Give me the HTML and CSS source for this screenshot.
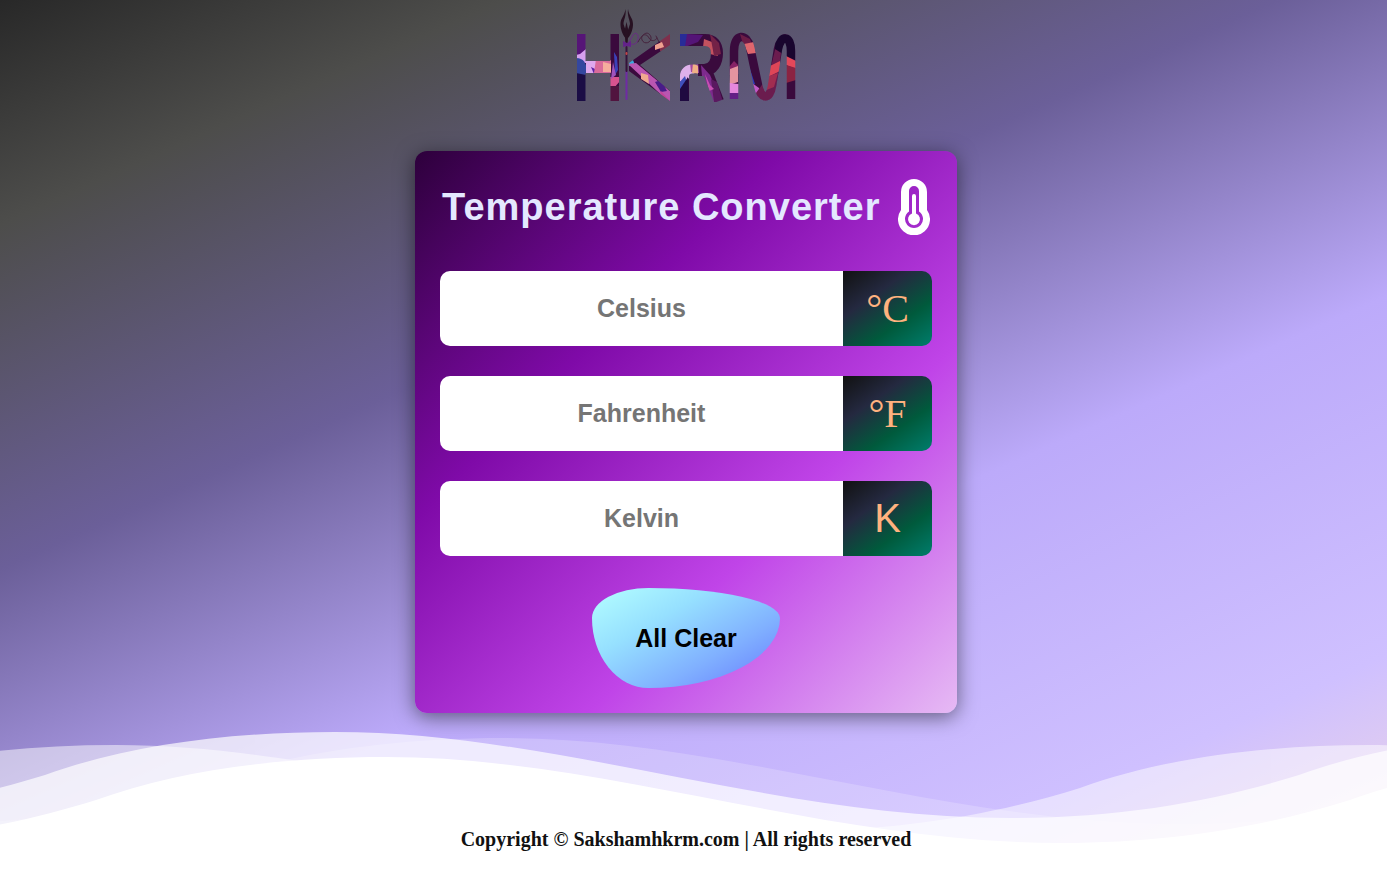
FILE: index.html
```html
<!DOCTYPE html>
<html lang="en">
<head>
<meta charset="utf-8">
<meta name="viewport" content="width=device-width, initial-scale=1">
<title>Temperature Converter</title>
<link rel="stylesheet" href="styles.css">
</head>
<body>
<header class="brand">
  <svg class="logo" viewBox="0 0 220 93" role="img" aria-label="HKRM">
    <defs>
      <mask id="letters" maskUnits="userSpaceOnUse" x="0" y="0" width="220" height="93">
        <g fill="#fff">
          <path d="M1 25h8.500v27h25V25h8.500v67h-8.500V64h-25v28H1z"/>
          <path d="M53 54 94 25v11L64 56l30 26v10L53 62z"/>
        </g>
        <g fill="none" stroke="#fff">
          <path stroke-width="12" d="M104 31h25c8 0 12 5 12 13 0 9-4 17-13 17h-6"/>
          <path stroke-width="10" d="m129 56 14 36"/>
          <path stroke-width="9" d="M108.500 92V67c0-4 3-7 8-7h10"/>
          <path stroke-width="8.500" d="M158 90V42c0-18 13-18 16-4l8 38c3 15 12 15 14 1l6-37c3-15 13-14 13 2v48"/>
        </g>
      </mask>
    </defs>
    <g mask="url(#letters)">
      <path fill="#3a0a3d" d="M0 0h220v93H0z"/>
      <path fill="#561577" d="M0 25h10v27H0z"/>
      <path fill="#d6a0ee" d="m4 45 6-5v14H0v-8z"/>
      <path fill="#34479f" d="M0 49c8 0 10 5 11 12l-3 9-8-1z"/>
      <path fill="#1b0d45" d="M0 64 10 66v27H0z"/>
      <path fill="#dfa9ee" d="M10 50h12v15H10z"/>
      <path fill="#5c22a6" d="m15 58 6 3-3 4z"/>
      <path fill="#d96b9a" d="m20 50 15 1v13H18z"/>
      <path fill="#f5ad9d" d="m27 53 8 2v8h-8z"/>
      <path fill="#3b41b8" d="m38 43 3 5 1 13-3 5z"/>
      <path fill="#d8538f" d="M33 68h11v4l-6 7h-5z"/>
      <path fill="#9f53bc" d="m37 53 3 13-5 4z"/>
      <path fill="#51143f" d="M33 77h12v16H33z"/>
      <path fill="#7e2f4c" d="m84 31 11-9v22l-11-2z"/>
      <path fill="#f0a08f" d="m79 36 7-3 2 5-9 3z"/>
      <path fill="#39a6dc" d="m52 52 5-1 2 5-7 1z"/>
      <path fill="#b956b1" d="m52 55 8-1 35 29v12z"/>
      <path fill="#f0a98f" d="m65 64 7 2 1 9-8-5z"/>
      <path fill="#481c88" d="m79 73 6-2 6 11-6 1z"/>
      <path fill="#c4449a" d="m85 82 9 10H82z"/>
      <path fill="#282c97" d="M104 25h7v13h-8z"/>
      <path fill="#541477" d="m111 25 16 1-5 7-13 5z"/>
      <path fill="#c4525f" d="m128 30 8 3 6 14-8-2-7-7z"/>
      <path fill="#742247" d="m134 25 9 9 2 11-7 2z"/>
      <path fill="#dfb1eb" d="M103 57c4-6 9-6 14-4l2 11-12 10-5-3z"/>
      <path fill="#a64a9d" d="m114 54 8-1 1 11-8-1z"/>
      <path fill="#f0b186" d="m117 54 5 3v8l-6-1z"/>
      <path fill="#7d2a8d" d="m125 56 9 10 12 27h-12l-8-26z"/>
      <path fill="#5a1960" d="m135 70 6 3 6 20h-9z"/>
      <path fill="#c850b2" d="m129 65 5 11 4 4-5 2z"/>
      <path fill="#4050bb" d="m103 74 6-7 2 7-6 11z"/>
      <path fill="#1f0a40" d="m112 68-8 12v13h9z"/>
      <path fill="#862266" d="m153 58 5-6 4 4 1 9-10 1z"/>
      <path fill="#e494a0" d="m154 60 8-3v16l-9 3z"/>
      <path fill="#e587dd" d="m153 74 10 1v10h-10z"/>
      <path fill="#641f86" d="M153 84h10v9h-10z"/>
      <path fill="#6b1c46" d="m164 25 10 5 3 9-10-4z"/>
      <path fill="#df666d" d="m168 35 10-2 2 11-8 1z"/>
      <path fill="#2b38bb" d="m173 57 6 18-5 2z"/>
      <path fill="#c258c7" d="m176 74 7 5 2 6-7-1z"/>
      <path fill="#6b1c4e" d="m180 84 13-18 8-33 5 3-7 53-14 5z"/>
      <path fill="#df4657" d="m192 58 12-6v10l-14 7z"/>
      <path fill="#a12d50" d="m190 68 12-4-4 14-10 4z"/>
      <path fill="#19052e" d="m200 25 20 1-1 25-9-4-11-7z"/>
      <path fill="#e3485a" d="m210 47 10 5v8l-10-4z"/>
      <path fill="#8b2342" d="m210 56 10 3v12l-10 3z"/>
    </g>
    <g fill="#271122">
      <path d="M49.500 0c1 7-2 11-2 15l3 9-1 5c-3-3-5-9-5-14 0-6 4-8 5-15z"/>
      <path d="M52 0c-1 7 2 11 2 15l-3 9 1 5c3-3 5-9 5-14 0-6-4-8-5-15z"/>
      <path d="m50.500 13 2 9-1 13h-2l-1-13z"/>
    </g>
    <g fill="none" stroke-linecap="round" stroke-linejoin="round">
      <path stroke="#6b2c86" d="m52 35 5-9c3-4 6 0 5 4-1 5-4 6-7 5"/>
      <path stroke="#46233d" d="M62 33c5-9 10-12 13-5 1 6-7 8-9 3-2-6 5-7 7-2 2 4 7 3 8 0m-1-2 3 6"/>
      <path stroke="#6f2ba4" stroke-width="2" d="M50.500 62v28"/>
      <path stroke="#35133b" stroke-width="2" d="M50.500 38v24"/>
      <path stroke="#c44646" stroke-width="2" d="M50.500 44v1"/>
    </g>
    <path fill="#63228a" d="m47 32 4 2 4-2v6l-4-1-4 1z"/>
  </svg>
</header>

<main class="card">
  <div class="heading">
    <h1 class="title">Temperature Converter</h1>
    <svg class="thermometer" viewBox="0 0 32 56" aria-hidden="true">
      <path fill-rule="evenodd" d="M3 13a13 13 0 0 1 26 0v18a16 16 0 1 1-26 0zM11 12v20.500a9 9 0 1 0 10 0V12a5 5 0 0 0-10 0z"/>
      <path d="M14 17a2 2 0 0 1 4 0v17.500a6 6 0 1 1-4 0z"/>
    </svg>
  </div>
  <form class="converter">
    <div class="field">
      <input class="value" id="celsius" type="text" placeholder="Celsius">
      <label class="unit" for="celsius">°C</label>
    </div>
    <div class="field">
      <input class="value" id="fahrenheit" type="text" placeholder="Fahrenheit">
      <label class="unit" for="fahrenheit">°F</label>
    </div>
    <div class="field">
      <input class="value" id="kelvin" type="text" placeholder="Kelvin">
      <label class="unit unit-plain" for="kelvin">K</label>
    </div>
    <button class="clear" type="reset">All Clear</button>
  </form>
</main>

<footer class="footer">
  <svg class="waves" viewBox="0 0 1387 148" preserveAspectRatio="none" aria-hidden="true">
    <defs>
      <path id="wave" d="M0 43C80 14 180 0 290 0c220 0 440 86 675 86 115 0 209-18 289-43v160H0z"/>
      <g id="swell"><use href="#wave" x="-1254"/><use href="#wave"/><use href="#wave" x="1254"/></g>
    </defs>
    <use href="#swell" class="wave-high" x="45"/>
    <use href="#swell" class="wave-middle" x="1080" y="13"/>
    <use href="#swell" class="wave-faint" x="214" y="6"/>
    <use href="#swell" class="wave-front" x="96" y="25"/>
  </svg>
  <p class="copyright">Copyright © Sakshamhkrm.com | All rights reserved</p>
</footer>
</body>
</html>
```
FILE: styles.css
```css
* {
  box-sizing: border-box;
}

body {
  margin: 0;
  min-height: 100vh;
  padding-right: 15px;
  display: flex;
  flex-direction: column;
  align-items: center;
  position: relative;
  overflow-x: hidden;
  font-family: "Liberation Sans", Arial, sans-serif;
  background: linear-gradient(156deg, #282828, #4d4d4b 15%, #6b5f99 38%, #bcaafa 61%, #cfc0ff 85%, #f0d8e2);
}

.brand {
  padding-top: 9px;
  margin-bottom: 49px;
}

.logo {
  display: block;
  width: 220px;
  height: 93px;
}

.card {
  width: 100%;
  max-width: 542px;
  padding: 25px;
  border-radius: 12px;
  background: linear-gradient(135deg, #2d003b, #7f0aa8, #c044e8, #e6baf4);
  box-shadow: 0 4px 20px rgba(0, 0, 0, 0.5);
}

.heading {
  display: flex;
  align-items: center;
  justify-content: space-between;
  height: 62px;
  padding: 0 2px;
  margin-bottom: 33px;
}

.title {
  margin: 0;
  font-size: 38px;
  line-height: 44px;
  letter-spacing: 1px;
  color: #e4e8ff;
}

.thermometer {
  flex: none;
  width: 32px;
  height: 56px;
  fill: #fff;
}

.converter {
  display: flex;
  flex-direction: column;
  gap: 30px;
}

.field {
  display: flex;
  height: 75px;
  border-radius: 10px;
  overflow: hidden;
}

.value {
  flex: 1;
  min-width: 0;
  border: 0;
  padding: 0;
  background: #fff;
  font: bold 25px "Liberation Sans", Arial, sans-serif;
  text-align: center;
}

.value::placeholder {
  color: #757575;
}

.unit {
  width: 89px;
  display: flex;
  align-items: center;
  justify-content: center;
  font: 40px "Liberation Serif", "Times New Roman", serif;
  color: #ffb27f;
  background: linear-gradient(145deg, #111, #242940, #005a3c, #007d6c);
}

.unit-plain {
  font-family: "Liberation Sans", Arial, sans-serif;
}

.clear {
  align-self: center;
  width: 188px;
  height: 100px;
  margin-top: 2px;
  border: 0;
  border-radius: 30% 70% 70% 30% / 30% 30% 70% 70%;
  background: linear-gradient(150deg, #b4ffff, #96e0ff, #80b0ff, #6478ff);
  font: bold 25px "Liberation Sans", Arial, sans-serif;
  color: #000;
}

.footer {
  margin-top: auto;
  height: 148px;
  display: flex;
  align-items: flex-end;
}

.waves {
  position: absolute;
  left: 0;
  bottom: 0;
  width: 100%;
  height: 148px;
  fill: #fff;
}

.wave-high {
  opacity: 0.7;
}

.wave-middle {
  opacity: 0.5;
}

.wave-faint {
  opacity: 0.2;
}

.copyright {
  position: relative;
  margin: 0 0 30px;
  font: bold 20px/22px "Liberation Serif", "Times New Roman", serif;
  color: #111;
}
```
